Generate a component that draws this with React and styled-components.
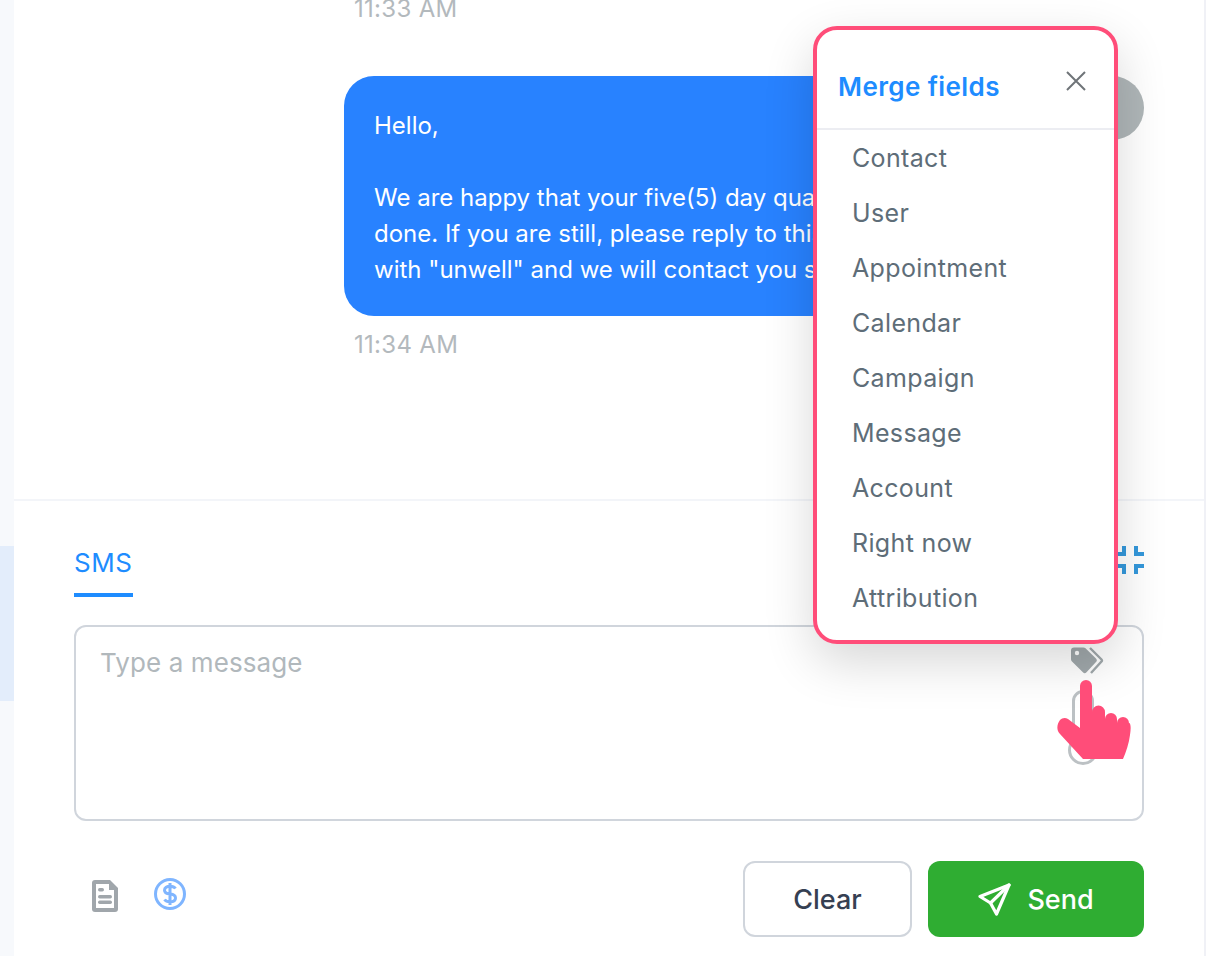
import React from 'react'
import styled, { createGlobalStyle } from 'styled-components'

const GlobalStyle = createGlobalStyle`
    html, body {
        margin: 0;
        padding: 0;
        background: #fff;
        font-family: "Inter", "Liberation Sans", sans-serif;
    }
    * {
        box-sizing: border-box;
    }
`

const Page = styled.div`
    position: relative;
    display: flex;
    width: 1206px;
    height: 956px;
    overflow: hidden;
    background: #fff;
`

const LeftRail = styled.div`
    flex: none;
    width: 14px;
    padding-top: 546px;
    background: #f7f9fc;
`

const RailActive = styled.div`
    height: 155px;
    background: #e3edfb;
`

const RightRail = styled.div`
    flex: none;
    width: 2px;
    background: #f0f1f6;
`

const Main = styled.div`
    flex: 1;
    display: flex;
    flex-direction: column;
    min-width: 0;
`

const Thread = styled.div`
    flex: none;
    height: 501px;
    padding: 0 60px 0 330px;
    overflow: hidden;
    border-bottom: 2px solid #f3f5f9;
`

const Time = styled.div`
    height: 36px;
    margin-top: ${props => props.$top}px;
    padding-left: 10px;
    font-size: 24px;
    letter-spacing: 0.3px;
    line-height: 36px;
    color: #b3b9bd;
`

const MessageRow = styled.div`
    display: flex;
    align-items: flex-start;
    gap: 20px;
    margin-top: 49px;
`

const Bubble = styled.div`
    flex: 1;
    height: 240px;
    padding: 32px 30px 0;
    border-radius: 30px;
    background: #2882ff;
    color: #fff;
    font-size: 24px;
    line-height: 36px;
    white-space: pre;
    overflow: hidden;
`

const Avatar = styled.div`
    flex: none;
    width: 64px;
    height: 64px;
    border-radius: 50%;
    background: #afb6b8;
`

const Composer = styled.div`
    flex: 1;
    display: flex;
    flex-direction: column;
    padding: 45px 60px 0;
`

const TabRow = styled.div`
    display: flex;
    align-items: flex-start;
    justify-content: space-between;
    height: 79px;
`

const Tab = styled.div`
    height: 51px;
    border-bottom: 4px solid #1e8cff;
    font-size: 26px;
    letter-spacing: 0.6px;
    line-height: 34px;
    color: #1e8cff;
`

const Editor = styled.div`
    display: flex;
    justify-content: space-between;
    height: 196px;
    padding: 18px 36px 0 24px;
    border: 2px solid #d0d5dc;
    border-radius: 12px;
`

const Placeholder = styled.div`
    font-size: 26px;
    letter-spacing: 0.1px;
    line-height: 36px;
    color: #b1b8bc;
`

const EditorIcons = styled.div`
    display: flex;
    flex-direction: column;
    width: 36px;
`

const EditorIcon = styled.svg`
    display: block;
    flex: none;
    margin: ${props => props.$top}px 0 0 ${props => props.$left}px;
`

const Footer = styled.div`
    display: flex;
    align-items: flex-start;
    justify-content: space-between;
    margin-top: 40px;
`

const FooterIcons = styled.div`
    display: flex;
    align-items: flex-start;
    gap: 36px;
    padding: 17px 0 0 18px;
`

const FooterIcon = styled.svg`
    display: block;
    margin-top: ${props => props.$top}px;
`

const Buttons = styled.div`
    display: flex;
    gap: 16px;
`

const Button = styled.button`
    display: flex;
    align-items: center;
    justify-content: center;
    gap: 16px;
    width: ${props => props.$width}px;
    height: 76px;
    padding: 0;
    border: ${props => (props.$primary ? 'none' : '2px solid #d0d5dc')};
    border-radius: 12px;
    background: ${props => (props.$primary ? '#2fad32' : '#fff')};
    color: ${props => (props.$primary ? '#fff' : '#364052')};
    font-family: inherit;
    font-size: 27px;
    font-weight: 500;
`

const Popover = styled.div`
    position: absolute;
    top: 26px;
    left: 813px;
    width: 305px;
    height: 618px;
    border: 4px solid #ff4d79;
    border-radius: 24px;
    background: #fff;
    box-shadow: 0 18px 50px rgba(0, 0, 0, 0.16);
`

const PopoverHead = styled.div`
    display: flex;
    align-items: flex-start;
    justify-content: space-between;
    height: 100px;
    padding: 39px 28px 0 21px;
    border-bottom: 2px solid #ecedf2;
`

const PopoverTitle = styled.div`
    font-size: 26px;
    font-weight: 600;
    letter-spacing: 0.4px;
    line-height: 36px;
    color: #1e8cff;
`

const CloseIcon = styled.svg`
    margin-top: 2px;
`

const FieldList = styled.div`
    display: flex;
    flex-direction: column;
    padding: 1px 0 0 35px;
`

const Field = styled.div`
    height: 55px;
    font-size: 25px;
    letter-spacing: 0.35px;
    line-height: 55px;
    color: #5e6d78;
`

const Cursor = styled.svg`
    position: absolute;
    top: 680px;
    left: 1057px;
`

const fields = ['Contact', 'User', 'Appointment', 'Calendar', 'Campaign', 'Message', 'Account', 'Right now', 'Attribution']

const messageText = `Hello,

We are happy that your five(5) day quarantine is
done. If you are still, please reply to this message
with "unwell" and we will contact you soon.`

function App() {
    return (
        <Page>
            <GlobalStyle />
            <LeftRail>
                <RailActive />
            </LeftRail>
            <Main>
                <Thread>
                    <Time $top={-9}>11:33 AM</Time>
                    <MessageRow>
                        <Bubble>{messageText}</Bubble>
                        <Avatar />
                    </MessageRow>
                    <Time $top={11}>11:34 AM</Time>
                </Thread>
                <Composer>
                    <TabRow>
                        <Tab>SMS</Tab>
                        <svg width="28" height="28" viewBox="0 0 28 28" fill="none" stroke="#3498db" strokeWidth="4">
                            <path d="M8 0v8H0M20 0v8h8M8 28V20H0M20 28V20h8" />
                        </svg>
                    </TabRow>
                    <Editor>
                        <Placeholder>Type a message</Placeholder>
                        <EditorIcons>
                            <EditorIcon width="33" height="27" viewBox="0 0 33 27" $top={2} $left={1}>
                                <path d="M0 3.500A3 3 0 0 1 3 .5h9.500a3 3 0 0 1 2 .8L25 11.500a2.500 2.500 0 0 1 0 3.500L15.500 25.200a2.500 2.500 0 0 1-3.600 0L1 14.500a3 3 0 0 1-1-2.200Z" fill="#a0a8ab" />
                                <circle cx="6" cy="6" r="2.200" fill="#fff" />
                                <path d="M19 1l11.500 11.500a1.500 1.500 0 0 1 0 2L20 26" fill="none" stroke="#a0a8ab" strokeWidth="2.400" />
                            </EditorIcon>
                            <EditorIcon width="22" height="46" viewBox="0 0 22 46" fill="none" stroke="#bcc1c4" strokeWidth="3" $top={16} $left={2}>
                                <rect x="1.500" y="1.500" width="19" height="43" rx="9.500" />
                            </EditorIcon>
                            <EditorIcon width="30" height="30" viewBox="0 0 30 30" fill="none" stroke="#bcc1c4" strokeWidth="3" $top={-1} $left={-2}>
                                <circle cx="15" cy="15" r="13.500" />
                            </EditorIcon>
                        </EditorIcons>
                    </Editor>
                    <Footer>
                        <FooterIcons>
                            <FooterIcon width="26" height="32" viewBox="0 0 26 32" $top={2}>
                                <path d="M3 0h15l8 8v21a3 3 0 0 1-3 3H3a3 3 0 0 1-3-3V3a3 3 0 0 1 3-3Z" fill="#a0a6ab" />
                                <path d="M4 4h13v6h5v18H4Z" fill="#fff" />
                                <rect x="6" y="8" width="6" height="3.500" rx="1.700" fill="#a0a6ab" />
                                <rect x="6" y="15" width="14" height="3.500" rx="1.700" fill="#a0a6ab" />
                                <rect x="6" y="20.500" width="14" height="3.500" rx="1.700" fill="#a0a6ab" />
                            </FooterIcon>
                            <FooterIcon width="32" height="32" viewBox="0 0 32 32" fill="none" stroke="#7fb5ff" strokeWidth="3" $top={0}>
                                <circle cx="16" cy="16" r="14.500" />
                                <path d="M21.500 10.500c-1-1.500-3-2.300-5.500-2.300-3 0-5.500 1.500-5.500 4s2.500 3.500 5.500 3.800 5.500 1.300 5.500 3.900-2.500 3.900-5.500 3.900c-2.500 0-4.500-.8-5.500-2.300M16 5v22" />
                            </FooterIcon>
                        </FooterIcons>
                        <Buttons>
                            <Button $width={169}>Clear</Button>
                            <Button $width={216} $primary>
                                <svg width="33" height="33" viewBox="0 0 33 33" fill="none" stroke="#fff" strokeWidth="3.200" strokeLinejoin="round" strokeLinecap="round">
                                    <path d="M31 2 2 13.500 12.500 20 18.500 31Z" />
                                    <path d="M31 2 12.500 20" />
                                </svg>
                                Send
                            </Button>
                        </Buttons>
                    </Footer>
                </Composer>
            </Main>
            <RightRail />
            <Popover>
                <PopoverHead>
                    <PopoverTitle>Merge fields</PopoverTitle>
                    <CloseIcon width="20" height="20" viewBox="0 0 20 20" stroke="#6f7478" strokeWidth="2" fill="none">
                        <path d="M1 1l18 18M19 1 1 19" />
                    </CloseIcon>
                </PopoverHead>
                <FieldList>
                    {fields.map(field => (
                        <Field key={field}>{field}</Field>
                    ))}
                </FieldList>
            </Popover>
            <Cursor width="74" height="80" viewBox="0 0 74 80">
                <path
                    d="M23 6a6 6 0 0 1 12 0v26a6.500 6.500 0 0 1 13 0v7a6 6 0 0 1 12 0v4a6 6 0 0 1 12 0c2 0 2 6 1 12-1 8-4 17-7 24H26L3 54c-4-4-3-10 0-14 2-2 5-3 8-1l12 9Z"
                    fill="#ff4d79"
                />
            </Cursor>
        </Page>
    )
}

export default App
